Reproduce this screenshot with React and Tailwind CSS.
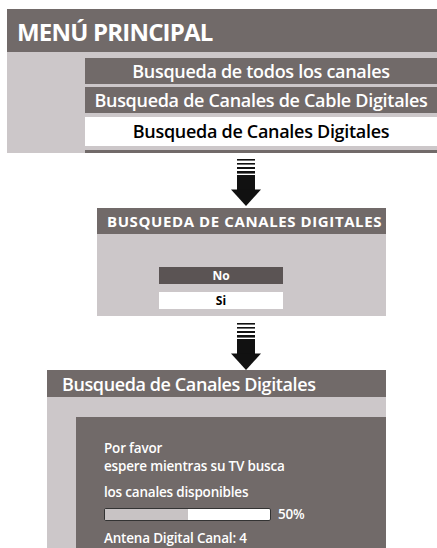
const font = { fontFamily: '"Open Sans", "Noto Sans", sans-serif' };

const Arrow = () => (
    <svg width="30" height="47" viewBox="0 0 30 47" className="block">
        <rect x="6" y="0" width="18" height="1.6" fill="#111" />
        <rect x="6" y="4" width="18" height="1.6" fill="#111" />
        <rect x="6" y="8" width="18" height="2" fill="#111" />
        <rect x="6" y="12" width="18" height="2.6" fill="#111" />
        <rect x="6" y="16" width="18" height="15" fill="#111" />
        <polygon points="0,30.5 30,30.5 15,47" fill="#111" />
    </svg>
);

const MenuItem = ({ label, active, className }) => (
    <div
        className={`flex items-center justify-center whitespace-nowrap text-[18px] font-semibold tracking-[-0.3px] ${
            active ? 'bg-white text-black' : 'bg-[#716a69] text-white'
        } ${className}`}
    >
        {label}
    </div>
);

export default function App() {
    return (
        <div className="min-h-[548px] bg-white overflow-hidden" style={font}>
            {/* Panel 1 */}
            <div className="ml-[7px] mt-[9px]">
                <div className="h-[43px] bg-[#716a69] flex items-center pl-[10px] pt-[3px]">
                    <span className="text-white text-[24px] font-bold tracking-[-0.8px] leading-none whitespace-nowrap">MENÚ PRINCIPAL</span>
                </div>
                <div className="bg-[#ccc7c9] pl-[78px] pt-[6px] flex flex-col">
                    <MenuItem label="Busqueda de todos los canales" className="h-[26px]" />
                    <MenuItem label="Busqueda de Canales de Cable Digitales" className="h-[26px] mt-[3px]" />
                    <MenuItem label="Busqueda de Canales Digitales" active className="h-[29px] mt-[4px]" />
                    <div className="h-[3px] mt-[4px] bg-[#716a69]" />
                </div>
            </div>

            {/* Arrow 1 */}
            <div className="ml-[231px] mt-[6px]">
                <Arrow />
            </div>

            {/* Panel 2 */}
            <div className="ml-[97px] mt-[2px] w-[289px]">
                <div className="h-[26px] bg-[#716a69] flex items-center pl-[10px]">
                    <span className="text-white text-[15px] font-bold tracking-[0.6px] leading-none whitespace-nowrap">BUSQUEDA DE CANALES DIGITALES</span>
                </div>
                <div className="h-[82px] bg-[#ccc7c9] pl-[62px] pt-[33px] flex flex-col">
                    <div className="w-[124px] h-[17px] bg-[#5b5454] text-white text-[12px] font-bold flex items-center justify-center">No</div>
                    <div className="w-[124px] h-[17px] mt-[8px] bg-white text-black text-[12px] font-bold flex items-center justify-center">Si</div>
                </div>
            </div>

            {/* Arrow 2 */}
            <div className="ml-[231px] mt-[7px]">
                <Arrow />
            </div>

            {/* Panel 3 */}
            <div className="ml-[47px] w-[339px]">
                <div className="h-[27px] bg-[#716a69] flex items-center pl-[15px]">
                    <span className="text-white text-[18px] font-semibold tracking-[-0.4px] leading-none whitespace-nowrap">Busqueda de Canales Digitales</span>
                </div>
                <div className="bg-[#ccc7c9] pt-[20px] pl-[29px]">
                    <div className="h-[131px] bg-[#716a69] pl-[28px] pt-[22px] text-white font-semibold text-[13.5px] tracking-[-0.2px]">
                        <div className="leading-[18px]">Por favor</div>
                        <div className="leading-[18px]">espere mientras su TV busca</div>
                        <div className="leading-[18px] mt-[8px]">los canales disponibles</div>
                        <div className="flex items-center mt-[4px]">
                            <div className="w-[167px] h-[13px] rounded-[2px] border border-[#333] bg-white flex overflow-hidden">
                                <div className="w-[50%] bg-[#c8c3c4]" />
                            </div>
                            <span className="ml-[7px] leading-[18px]">50%</span>
                        </div>
                        <div className="leading-[18px] mt-[6px]">Antena Digital Canal: 4</div>
                    </div>
                </div>
            </div>
        </div>
    );
}
